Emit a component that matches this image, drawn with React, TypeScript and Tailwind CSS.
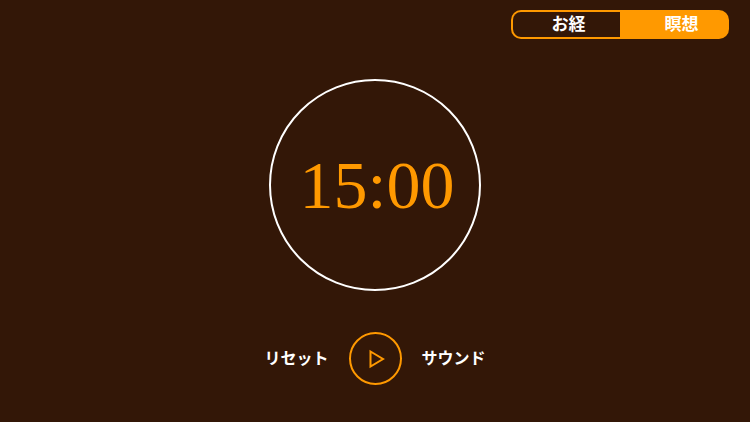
import React, { useEffect, useState } from 'react';

const DURATION = 15 * 60;

const formatTime = (seconds: number) =>
    `${String(Math.floor(seconds / 60)).padStart(2, '0')}:${String(seconds % 60).padStart(2, '0')}`;

const ModeSwitch: React.FC = () => {
    const [mode, setMode] = useState<'sutra' | 'meditation'>('meditation');

    return (
        <div className="grid h-[29px] w-[218px] grid-cols-2 text-[17px] leading-6 font-bold">
            <button
                type="button"
                aria-pressed={mode === 'sutra'}
                onClick={() => setMode('sutra')}
                className={`flex items-center justify-center rounded-l-[10px] border-2 border-r-0 border-[#ff9900] pl-1 ${mode === 'sutra' ? 'bg-[#ff9900]' : ''}`}
            >
                お経
            </button>
            <button
                type="button"
                aria-pressed={mode === 'meditation'}
                onClick={() => setMode('meditation')}
                className={`flex items-center justify-center rounded-r-[10px] border-2 border-l-0 border-[#ff9900] pl-4 ${mode === 'meditation' ? 'bg-[#ff9900]' : ''}`}
            >
                瞑想
            </button>
        </div>
    );
};

export default function App() {
    const [remaining, setRemaining] = useState(DURATION);
    const [running, setRunning] = useState(false);

    useEffect(() => {
        if (!running) return;
        const id = setInterval(() => setRemaining((s) => Math.max(0, s - 1)), 1000);
        return () => clearInterval(id);
    }, [running]);

    const reset = () => {
        setRunning(false);
        setRemaining(DURATION);
    };

    return (
        <div className="flex min-h-screen flex-col bg-[#331707] font-['Liberation_Serif','Noto_Sans_CJK_JP',serif] text-white">
            <header className="flex justify-end px-[21px] pt-[10px]">
                <ModeSwitch />
            </header>
            <main className="flex flex-col items-center pt-10">
                <div className="flex size-[212px] items-center justify-center rounded-full border-2 border-white">
                    <time className="pl-1 text-[68px] leading-none text-[#ff9900]">{formatTime(remaining)}</time>
                </div>
                <div className="mt-[41px] grid w-full grid-cols-[1fr_auto_1fr] items-center gap-5 text-base font-bold">
                    <button type="button" onClick={reset} className="justify-self-end">リセット</button>
                    <button
                        type="button"
                        aria-label={running ? '一時停止' : '再生'}
                        onClick={() => setRunning(!running)}
                        className="flex size-[53px] items-center justify-center rounded-full border-2 border-[#ff9900] text-[#ff9900]"
                    >
                        <svg viewBox="0 0 20 20" className="size-5" fill="none" stroke="currentColor" strokeWidth="2">
                            <path d="M5.5 2.5 L18 10 L5.5 17.5 Z" />
                        </svg>
                    </button>
                    <button type="button" className="justify-self-start">サウンド</button>
                </div>
            </main>
        </div>
    );
}
